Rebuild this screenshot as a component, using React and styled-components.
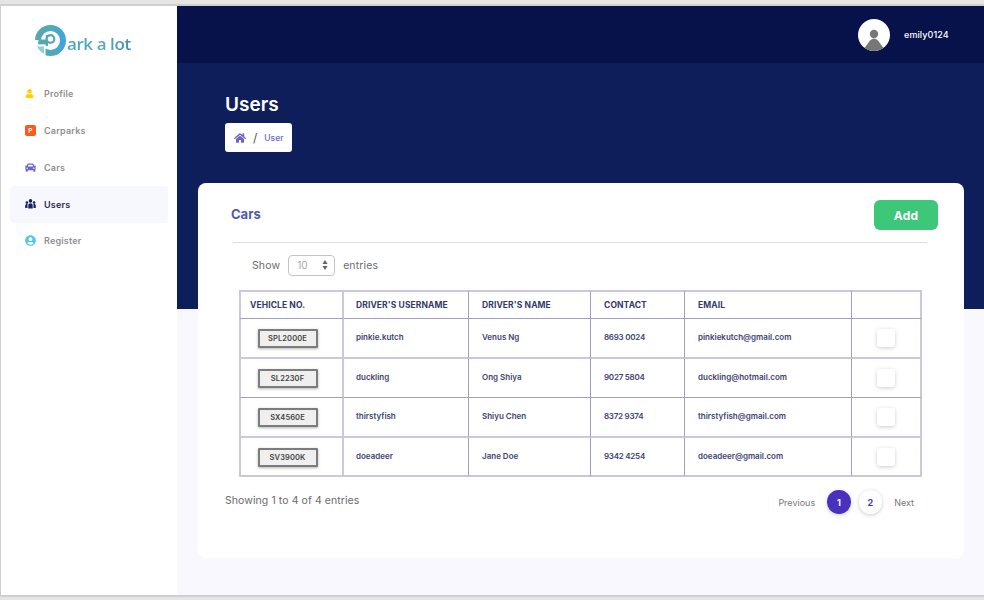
import React from "react";
import styled, { createGlobalStyle } from "styled-components";
import { FaHome, FaCar, FaUser, FaUserCircle } from "react-icons/fa";

const Global = createGlobalStyle`
  html, body { margin: 0; padding: 0; background: #e5e5e5; }
  body { font-family: Inter, "Liberation Sans", sans-serif; }
`;
const Frame = styled.div`
  width: 984px; height: 600px; box-sizing: border-box; overflow: hidden;
  padding: 4px 0 3px; background: #e5e5e5;
`;
const Window = styled.div`
  height: 593px; box-sizing: border-box; display: flex;
  border-top: 2px solid #cfcfcf; border-bottom: 2px solid #cfcfcf; border-left: 1px solid #cfcfcf;
`;
const Sidebar = styled.aside`
  width: 176px; flex: none; background: #fff; box-sizing: border-box;
  display: flex; flex-direction: column;
`;
const LogoRow = styled.div`
  height: 62px; padding: 18.5px 0 0 34px; box-sizing: border-box;
  display: flex; align-items: flex-start; gap: 1px;
`;
const LogoText = styled.span`
  font-family: "Open Sans", sans-serif; font-weight: 600; font-size: 17px; line-height: 1;
  margin-top: 10px; white-space: nowrap; letter-spacing: -.42px;
  background: linear-gradient(90deg, #46a6c0, #5aa7b8 60%, #3f8fb0);
  -webkit-background-clip: text; background-clip: text; color: transparent;
`;
const Nav = styled.nav`
  display: flex; flex-direction: column; padding: 7.500px 9px 0 9px;
`;
const NavItem = styled.div`
  height: 36.75px; display: flex; align-items: center; border-radius: 3px;
  padding-left: ${p => p.$pad || 15}px; gap: ${p => p.$gap || 8}px;
  background: ${p => (p.$active ? "#f7f7fe" : "transparent")};
  color: ${p => (p.$active ? "#2b2b45" : "#8f8f93")};
  font-size: 9px; font-weight: 600; letter-spacing: .2px;
`;
const IconSlot = styled.span`
  width: 11px; flex: none; display: flex; align-items: center; justify-content: center; color: ${p => p.$c};
  font-size: ${p => p.$s || 10}px;
`;
const PBadge = styled.span`
  width: 11px; height: 11px; flex: none; border-radius: 2px; background: #fb5a1f; color: #fff;
  font-size: 6.500px; font-weight: 600; display: flex; align-items: center; justify-content: center;
`;
const Main = styled.main`
  flex: 1; min-width: 0; background: #f8f8fe; display: flex; flex-direction: column;
`;
const Topbar = styled.header`
  height: 57px; flex: none; background: #07114a; display: flex; align-items: center;
  justify-content: flex-end; padding: 0 35px 0 0; gap: 14px; box-sizing: border-box;
`;
const UserName = styled.span`
  color: #fff; font-size: 9px; font-weight: 500; letter-spacing: .1px; width: 45px; white-space: nowrap;
`;
const Avatar = styled.svg`
  width: 32px; height: 32px; display: block;
`;
const Hero = styled.section`
  height: 246px; flex: none; background: #0e1e5b; padding: 30px 0 0 48px; box-sizing: border-box;
`;
const Title = styled.h1`
  margin: 0 0 6px; color: #fff; font-size: 19px; line-height: 24px; font-weight: 600;
`;
const Crumb = styled.div`
  width: 67px; height: 29px; box-sizing: border-box; background: #fff; border-radius: 3px;
  display: flex; align-items: center; padding-left: 9px; gap: 7px; color: #6a64c8;
  font-size: 8.500px; font-weight: 500;
`;
const Slash = styled.span`color: #555; font-size: 12px; font-weight: 400;`;
const Card = styled.section`
  width: 766px; height: 375px; margin: -126px 0 0 21px; flex: none; background: #fff; border-radius: 8px;
  box-sizing: border-box; padding: 17px 26px 0 27px;
`;
const CardHead = styled.div`
  display: flex; align-items: flex-start; justify-content: space-between;
  height: 42px; margin: 0 0 0 6px; box-sizing: border-box;
`;
const CardTitle = styled.h2`
  margin: 8px 0 0; font-size: 13px; font-weight: 700; color: #4d5cb0; line-height: 1;
`;
const AddButton = styled.button`
  width: 64px; height: 30px; border: 0; border-radius: 6px; background: #3cc878; color: #fff;
  font: 700 12px Inter, sans-serif; letter-spacing: .2px; padding: 0;
`;
const Rule = styled.hr`
  border: 0; height: 1px; background: #dedede; margin: 0 11px 0 8px;
`;
const Length = styled.div`
  display: flex; align-items: center; gap: 7px; padding-left: 27px; height: 22px; margin-top: 11px;
  color: #6c6c70; font-size: 10.500px; letter-spacing: .12px;
`;
const Select = styled.div`
  width: 47px; height: 21px; box-sizing: border-box; border: 1px solid #c4c4c4; border-radius: 4px;
  display: flex; align-items: center; justify-content: space-between; padding: 0 6px 0 8px;
  color: #a8a8a8; font-size: 10px; margin: 0 1px 0 1px;
`;
const Arrows = styled.svg`width: 6px; height: 10px; display: block;`;
const edge = thick => (thick ? "2px solid #cbc7df" : "1px solid #a39cc6");
const Table = styled.table`
  border-collapse: separate; border-spacing: 0; table-layout: fixed; width: 683px; margin: 14px 0 0 14px;
`;
const cellEdges = p => `
  border-right: ${edge(p.$r)};
  border-bottom: ${edge(p.$b)};
  ${p.$l ? `border-left: ${edge(true)};` : ""}
  ${p.$t ? `border-top: ${edge(true)};` : ""}
`;
const Th = styled.th`
  height: 29px; padding: 0 0 0 ${p => p.$pad || 13}px; text-align: left; font-size: 8.500px; font-weight: 700;
  box-sizing: border-box; white-space: nowrap; letter-spacing: .1px; color: #33396a;
  ${cellEdges}
`;
const Td = styled.td`
  padding: 0 0 2px ${p => p.$pad || 13}px; font-size: 8px; font-weight: 600; box-sizing: border-box;
  white-space: nowrap; color: #3e4470; letter-spacing: ${p => p.$ls || 0}px;
  ${cellEdges}
`;
const PlateCell = styled.td`
  padding: 0; text-align: center; box-sizing: border-box;
  ${cellEdges}
`;
const Plate = styled.span`
  display: inline-flex; align-items: center; justify-content: center; width: 60px; height: 19px;
  margin: 0 0 3px -8px; box-sizing: border-box; background: #efefef; border: 2px solid #7c7c7c; border-radius: 1px;
  box-shadow: 0 1px 3px rgba(0,0,0,.3); color: #444; font-size: 7.500px; font-weight: 600; letter-spacing: .1px;
`;
const ActionCell = styled.td`
  padding: 0 0 2px 0; text-align: center; box-sizing: border-box;
  ${cellEdges}
`;
const Blank = styled.span`
  display: inline-block; width: 18px; height: 18px; border-radius: 3px; background: #fff;
  box-shadow: 0 1px 4px rgba(0,0,0,.2); vertical-align: middle;
`;
const Foot = styled.div`
  display: flex; align-items: center; justify-content: space-between; margin-top: 13px; height: 24px;
`;
const Info = styled.span`color: #6a6a6e; font-size: 10.500px; letter-spacing: .08px; margin-top: -3px;`;
const Pager = styled.div`
  display: flex; align-items: center; margin-right: 24px; color: #77777c; font-size: 9px;
`;
const PageText = styled.span`margin: ${p => p.$m};`;
const PageDot = styled.span`
  width: 23.500px; height: 23.500px; border-radius: 50%; display: flex; align-items: center; justify-content: center;
  font-size: 9px; font-weight: 700;
  background: ${p => (p.$on ? "#4a31bd" : "#fff")};
  color: ${p => (p.$on ? "#fff" : "#4a31bd")};
  box-shadow: 0 1px 4px rgba(0,0,0,.2);
  margin-right: ${p => p.$mr || 0}px;
`;

const Logo = () => (
  <svg width="31" height="31" viewBox="0 0 31 31" aria-hidden="true" style={{ display: "block", flex: "none" }}>
    <defs>
      <linearGradient id="lg" x1="0" x2="1" y1="0" y2="0">
        <stop offset="0" stopColor="#55a8ab" />
        <stop offset=".6" stopColor="#4fa9bd" />
        <stop offset="1" stopColor="#3fa6da" />
      </linearGradient>
    </defs>
    <circle cx="15.500" cy="15.500" r="12.500" fill="none" stroke="url(#lg)" strokeWidth="6" />
    <path d="M0 15h11v7H0z" fill="#fff" />
    <path d="M3.500 14.500h8.500v5H3z" fill="#55a8ab" />
    <path d="M0 19.700h10.500v11.300H0z" fill="#fff" />
    <path d="M2.200 21.500h6.800v7.200C5.800 27.400 3.300 24.700 2.200 21.500z" fill="#8fd1d3" />
    <path d="M10.800 10h2.200v11h-2.200z" fill="#55a8b2" />
    <circle cx="15.500" cy="14" r="3.800" fill="#fff" stroke="#55a8b8" strokeWidth="2.200" />
  </svg>
);

const UsersGlyph = () => (
  <svg width="11" height="10" viewBox="0 0 11 10" fill="#1a1f5e" aria-hidden="true" style={{ display: "block" }}>
    <circle cx="5.500" cy="1.900" r="1.800" />
    <circle cx="1.900" cy="3.600" r="1.300" />
    <circle cx="9.100" cy="3.600" r="1.300" />
    <path d="M3.300 9.500V6.200c0-1.300.9-2 2.200-2s2.200.7 2.200 2v3.300zM.2 9V6.700c0-1 .7-1.700 1.700-1.700.3 0 .5 0 .8.1-.2.400-.2.800-.2 1.200V9zM10.800 9V6.700c0-1-.7-1.700-1.700-1.700-.3 0-.5 0-.8.1.2.400.2.800.2 1.200V9z" />
  </svg>
);

const rows = [
  ["SPL2000E", "pinkie.kutch", "Venus Ng", "8693 0024", "pinkiekutch@gmail.com"],
  ["SL2230F", "duckling", "Ong Shiya", "9027 5804", "duckling@hotmail.com"],
  ["SX4560E", "thirstyfish", "Shiyu Chen", "8372 9374", "thirstyfish@gmail.com"],
  ["SV3900K", "doeadeer", "Jane Doe", "9342 4254", "doeadeer@gmail.com"],
];
const widths = [105, 125, 122, 94, 167, 70];
const rowLook = [
  { h: 40, b: true },
  { h: 39, b: false },
  { h: 40, b: true },
  { h: 39, b: true },
];

export default function App() {
  return (
    <Frame>
      <Global />
      <Window>
        <Sidebar>
          <LogoRow>
            <Logo />
            <LogoText>ark a lot</LogoText>
          </LogoRow>
          <Nav>
            <NavItem $pad={14} $gap={9}><IconSlot $c="#ffd000" $s={9}><FaUser /></IconSlot>Profile</NavItem>
            <NavItem><IconSlot><PBadge>P</PBadge></IconSlot>Carparks</NavItem>
            <NavItem><IconSlot $c="#6a64c8" $s={13}><FaCar /></IconSlot>Cars</NavItem>
            <NavItem $active><IconSlot><UsersGlyph /></IconSlot>Users</NavItem>
            <NavItem><IconSlot $c="#50c4f4" $s={11}><FaUserCircle /></IconSlot>Register</NavItem>
          </Nav>
        </Sidebar>
        <Main>
          <Topbar>
            <Avatar viewBox="0 0 32 32" aria-hidden="true">
              <circle cx="16" cy="16" r="16" fill="#fff" />
              <circle cx="16" cy="15" r="4.200" fill="#777" />
              <path d="M6.500 29l5.500-7.500c1-1.200 2.500-1.800 4-1.800s3 .6 4 1.800l5.500 7.500c-2.500 2-6 3-9.500 3s-7-1-9.500-3z" fill="#777" />
            </Avatar>
            <UserName>emily0124</UserName>
          </Topbar>
          <Hero>
            <Title>Users</Title>
            <Crumb>
              <FaHome size={12} />
              <Slash>/</Slash>
              <span>User</span>
            </Crumb>
          </Hero>
          <Card>
            <CardHead>
              <CardTitle>Cars</CardTitle>
              <AddButton>Add</AddButton>
            </CardHead>
            <Rule />
            <Length>
              Show
              <Select>
                10
                <Arrows viewBox="0 0 6 10" aria-hidden="true">
                  <path d="M3 0l2.600 4H.4zM3 10L.4 6h5.200z" fill="#666" />
                </Arrows>
              </Select>
              entries
            </Length>
            <Table>
              <colgroup>
                {widths.map((w, i) => <col key={i} style={{ width: w }} />)}
              </colgroup>
              <thead>
                <tr>
                  <Th $pad={9} $l $t $r>VEHICLE NO.</Th>
                  <Th $pad={12} $t>DRIVER'S USERNAME</Th>
                  <Th $t>DRIVER'S NAME</Th>
                  <Th $t>CONTACT</Th>
                  <Th $t>EMAIL</Th>
                  <Th $t $r />
                </tr>
              </thead>
              <tbody>
                {rows.map((r, i) => (
                  <tr key={r[0]} style={{ height: rowLook[i].h }}>
                    <PlateCell $l $r $b={rowLook[i].b}><Plate>{r[0]}</Plate></PlateCell>
                    <Td $pad={12} $b={rowLook[i].b}>{r[1]}</Td>
                    <Td $b={rowLook[i].b}>{r[2]}</Td>
                    <Td $b={rowLook[i].b} $ls={-0.25}>{r[3]}</Td>
                    <Td $b={rowLook[i].b}>{r[4]}</Td>
                    <ActionCell $r $b={rowLook[i].b}><Blank /></ActionCell>
                  </tr>
                ))}
              </tbody>
            </Table>
            <Foot>
              <Info>Showing 1 to 4 of 4 entries</Info>
              <Pager>
                <PageText $m="0 12px 0 0">Previous</PageText>
                <PageDot $on $mr={8}>1</PageDot>
                <PageDot $mr={12}>2</PageDot>
                <PageText $m="0">Next</PageText>
              </Pager>
            </Foot>
          </Card>
        </Main>
      </Window>
    </Frame>
  );
}
